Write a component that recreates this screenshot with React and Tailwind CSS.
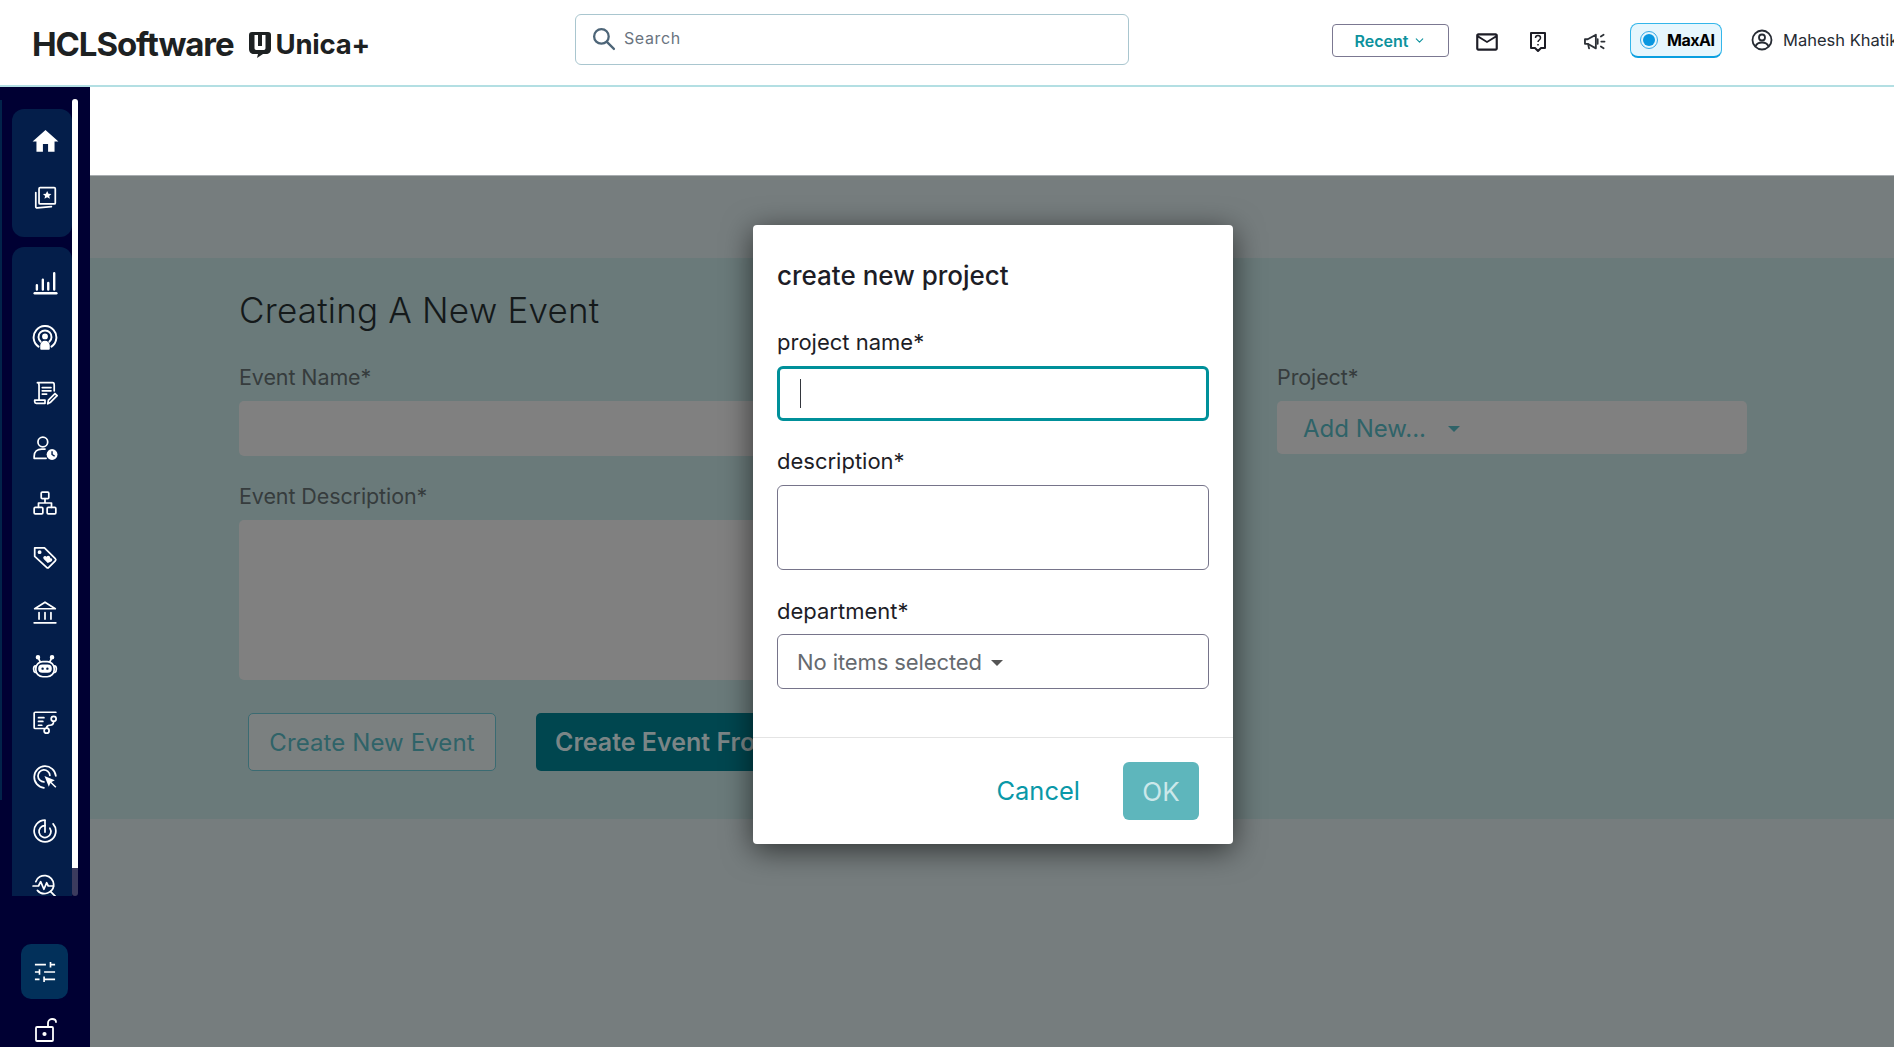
import React from "react";
import { MdHome, MdOutlineMailOutline } from "react-icons/md";
import { ChevronDown } from "lucide-react";

const F = "font-['Inter','Noto_Sans',sans-serif]";

const S = ({ children, fill = "none", w = 1.6, size = 26 }) => (
  <svg width={size} height={size} viewBox="0 0 24 24" fill={fill} stroke="currentColor" strokeWidth={w} strokeLinecap="round" strokeLinejoin="round">
    {children}
  </svg>
);

const icons = {
  star: (
    <S>
      <rect x="6.500" y="2.500" width="15" height="15" rx="1" />
      <path d="M3.500 7v13c0 .8.6 1.300 1.400 1.200l13-1.200" />
      <path d="M14 5.500l1.200 2.500 2.700.3-2 1.800.6 2.700-2.500-1.400-2.500 1.400.6-2.700-2-1.800 2.700-.3z" fill="currentColor" stroke="none" />
    </S>
  ),
  chart: (
    <S w={2.200}>
      <path d="M2.500 21.500h20" />
      <path d="M4.500 18v-4M10 18V9M15 18v-6M20.500 18V3" />
    </S>
  ),
  podcast: (
    <S w={1.800}>
      <path d="M6 20a10.500 10.500 0 1 1 12 0" />
      <path d="M8 15.500a6 6 0 1 1 8 0" />
      <circle cx="12" cy="10.500" r="1.800" fill="currentColor" />
      <path d="M8.500 22v-3c0-2 1.500-3.500 3.500-3.500s3.500 1.500 3.500 3.500v3z" fill="currentColor" />
    </S>
  ),
  doc: (
    <S>
      <path d="M6.500 18.500V5c0-1.500-.3-2.500-1.500-2.500h14c1 0 1.500 1 1.500 2V10" />
      <path d="M2.500 18.500h9.500v3H4c-1 0-1.500-.7-1.500-1.500z" />
      <path d="M9.500 7h8M9.500 10h8M9.500 13h4" />
      <path d="M14.500 22l.7-3.500 6-6 2 2-6 6z" />
    </S>
  ),
  userclock: (
    <S>
      <circle cx="10" cy="6.500" r="4.500" />
      <path d="M2 21.500v-2c0-4 3-6.500 7-6.500h3M2 21.500h11" />
      <circle cx="18.500" cy="18" r="5" fill="currentColor" stroke="none" />
      <path d="M18.500 15.500V18l2 1.200" stroke="#041e4a" strokeWidth="1.300" />
    </S>
  ),
  network: (
    <S>
      <rect x="8.500" y="2" width="7" height="6" rx="1" />
      <rect x="2" y="16" width="8" height="6" rx="1" />
      <rect x="14" y="16" width="8" height="6" rx="1" />
      <path d="M12 8v4M6 16v-4h12v4" />
    </S>
  ),
  tag: (
    <S>
      <path d="M2.500 3.500h9l10 10c.6.6.6 1.400 0 2l-6 6c-.6.6-1.400.6-2 0l-11-10z" />
      <circle cx="7" cy="7.500" r="1" fill="currentColor" />
      <path d="M14.500 17.500l-3.700-3.700c-1.500-2 1.200-3.800 2.700-2 1-1.800 3.800-.6 3.300 1.400 2-.2 2.600 2 1 3z" fill="currentColor" stroke="none" />
    </S>
  ),
  bank: (
    <S>
      <path d="M2.500 9L12 3l9.500 6z" />
      <path d="M2 22h20M6.500 12.500v6M12 12.500v6M17.500 12.500v6" />
    </S>
  ),
  bot: (
    <S>
      <rect x="3.500" y="7" width="17" height="14" rx="6.500" />
      <path d="M3 11c-2 .5-2 5 0 6M21 11c2 .5 2 5 0 6" />
      <circle cx="5.500" cy="3" r="1.300" fill="currentColor" />
      <circle cx="18.500" cy="3" r="1.300" fill="currentColor" />
      <path d="M6 4l1.500 3M18 4l-1.500 3" />
      <rect x="6.500" y="10.500" width="11" height="6" rx="3" fill="currentColor" />
      <circle cx="9.800" cy="13.500" r="1.100" fill="#041e4a" stroke="none" />
      <circle cx="14.200" cy="13.500" r="1.100" fill="#041e4a" stroke="none" />
    </S>
  ),
  flow: (
    <S>
      <path d="M22 3H3c-.6 0-1 .4-1 1v13c0 .6.4 1 1 1h8" />
      <path d="M6 8h5M6 11.500h4M6 15h3" />
      <circle cx="20" cy="9" r="2.300" />
      <circle cx="13.500" cy="20" r="2.300" />
      <path d="M20 11.300c0 3-2 3.700-3.500 3.700s-3 1-3 2.500" />
    </S>
  ),
  cursor: (
    <S>
      <path d="M11 22a10 10 0 1 1 11-11" />
      <path d="M11 16.500a5.500 5.500 0 1 1 5.500-6" />
      <path d="M11.500 11l4 10 1.500-3.500 4.500 4.500 1-1-4.500-4.500 3-1.500z" fill="currentColor" stroke="none" />
    </S>
  ),
  radar: (
    <S>
      <path d="M12 2a10 10 0 1 0 7.500 3.400" />
      <path d="M12 7a5.500 5.500 0 1 0 4.500 2.400" />
      <path d="M12 2.500V13" />
    </S>
  ),
  wave: (
    <S>
      <path d="M3.500 8a8.500 8.500 0 0 1 16.500 2.500 8.500 8.500 0 0 1-15 5.500" />
      <path d="M1 12h5l2-4 3 7 2.500-6 1.500 3h5" />
      <path d="M17 17l6 6" />
    </S>
  ),
};

const SideIcon = ({ name, home }) => (
  <div className="flex h-[54.800px] w-full shrink-0 items-center justify-center pl-[6px] text-white">
    {home ? <MdHome size={31} /> : icons[name]}
  </div>
);

const Label = ({ children, className = "" }) => (
  <div className={`text-[21.500px] leading-[28px] tracking-[-0.1px] text-[#363c3d] ${className}`}>{children}</div>
);

const ModalLabel = ({ children }) => (
  <div className="text-[22px] leading-[28px] text-[#1d1d26]">{children}</div>
);

export default function App() {
  return (
    <div className={`relative flex h-screen w-full flex-col overflow-hidden bg-white ${F}`}>
      <header className="flex h-[87px] shrink-0 items-center overflow-hidden border-b-2 border-[#b3dfe3] bg-white">
        <div className="flex w-[575px] shrink-0 items-center pl-[32px] pt-[4px] text-[#1d2122]">
          <span className="text-[33px] font-bold leading-none tracking-[-1.100px]">HCLSoftware</span>
          <svg className="ml-[15px]" width="24" height="28" viewBox="0 0 24 28" fill="currentColor">
            <path d="M4 1h16c2 0 3 1 3 3v14c0 3-2 5-5 5h-3l-6 4 1-4H6c-3 0-5-2-5-5V4c0-2 1-3 3-3zm2.500 3v13c0 1.500 1 2 2 2h7c1 0 2-.5 2-2V4h-3.500v11h-4V4z" fillRule="evenodd" />
          </svg>
          <span className="ml-[3px] text-[27.500px] font-bold leading-none tracking-[-0.2px]">Unica+</span>
        </div>
        <div className="mt-[-6px] flex h-[51px] w-[554px] shrink-0 items-center rounded-[6px] border border-[#a9c6cf] pl-[15px]">
          <svg className="mb-[2px]" width="25" height="25" viewBox="0 0 24 24" fill="none" stroke="#4d6578" strokeWidth="2.200" strokeLinecap="round">
            <circle cx="10" cy="10" r="7" />
            <path d="M15.500 15.500L22 22" />
          </svg>
          <span className="mb-[4px] ml-[8px] text-[16px] tracking-[0.6px] text-[#6a7480]">Search</span>
        </div>
        <div className="ml-[203px] mt-[-4px] flex h-[33px] w-[117px] shrink-0 items-center justify-center gap-[5px] rounded-[4px] border border-[#7b7891] text-[16px] font-semibold text-[#0d929d]">
          Recent <ChevronDown size={13} />
        </div>
        <div className="ml-[25px] mt-[-2px] flex shrink-0 items-center text-[#1d1d26]">
          <MdOutlineMailOutline size={26} />
          <svg className="ml-[29px]" width="18" height="22" viewBox="0 0 18 22" fill="none" stroke="currentColor" strokeWidth="2">
            <path d="M2 2h14v15h-4l-3 3-3-3H2z" strokeLinejoin="round" />
            <path d="M6.500 7c0-3.200 5-3.200 5 0 0 2-2.500 2-2.500 4M9 13v1.500" strokeWidth="1.500" />
          </svg>
          <svg className="ml-[35px]" width="25" height="20" viewBox="0 0 24 22" fill="none" stroke="#2c3036" strokeWidth="2" strokeLinecap="round">
            <path d="M1.500 8v5h3l9 5V3l-9 5z" strokeLinejoin="round" />
            <path d="M5 13.500l1 4.500M15.500 8v5M19 5l3-2M19.500 10.500H23M19 16l3 2" />
          </svg>
        </div>
        <div className="ml-[23px] mt-[-4px] flex h-[35px] w-[92px] shrink-0 items-center rounded-[8px] border border-[#34b6ea] border-b-2 border-b-[#0a9fe0] bg-[#e6f6fd] pl-[9px]">
          <span className="relative flex h-[18px] w-[18px] items-center justify-center rounded-full border border-[#36a9e6]">
            <span className="h-[12px] w-[12px] rounded-full bg-[#0a97e0]" />
          </span>
          <span className="ml-[9px] text-[16px] font-bold tracking-[-0.5px] text-black">MaxAI</span>
        </div>
        <div className="ml-[29px] mt-[-6px] flex shrink-0 items-center text-[#262b33]">
          <svg width="22" height="22" viewBox="0 0 22 22" fill="none" stroke="currentColor" strokeWidth="1.800">
            <circle cx="11" cy="11" r="9.500" />
            <circle cx="11" cy="8.500" r="3" />
            <path d="M4.500 17.500c1-3 3.500-4 6.500-4s5.500 1 6.500 4" />
          </svg>
          <span className="ml-[10px] mt-[2px] whitespace-nowrap text-[16.500px]">Mahesh Khatik</span>
        </div>
      </header>

      <div className="flex min-h-0 flex-1">
        <aside className="flex w-[90px] shrink-0 flex-col bg-[#000033]">
          <div className="flex h-[809px] shrink-0">
            <div className="mb-[96px] mt-[13px] w-[2px] shrink-0 bg-[#02234a]" />
            <div className="flex h-full w-[70px] shrink-0 flex-col gap-[10px] pl-[10px] pt-[22px]">
              <div className="flex h-[128px] w-[60px] shrink-0 flex-col gap-[2px] rounded-[12px] bg-[#041e4a] pt-[5px]">
                <SideIcon home />
                <SideIcon name="star" />
              </div>
              <div className="flex min-h-0 w-[60px] flex-1 flex-col overflow-hidden rounded-t-[12px] bg-[#041e4a] pt-[9px]">
                {["chart", "podcast", "doc", "userclock", "network", "tag", "bank", "bot", "flow", "cursor", "radar", "wave"].map((n) => (
                  <SideIcon key={n} name={n} />
                ))}
              </div>
            </div>
            <div className="mt-[12px] flex w-[6px] shrink-0 flex-col">
              <div className="h-[769px] rounded-t-[3px] bg-white" />
              <div className="h-[28px] rounded-b-[3px] bg-[#3b3b5e]" />
            </div>
          </div>
          <div className="flex flex-1 flex-col pl-[21px] pt-[48px]">
            <div className="flex h-[55px] w-[47px] items-center justify-center rounded-[10px] bg-[#02305a] text-white">
              <svg width="22" height="22" viewBox="0 0 24 24" fill="none" stroke="currentColor" strokeWidth="1.800">
                <path d="M1 4h12M18 4h5M18 1v6M1 12h5M11 12h12M6 9v6M1 20h5M11 20h12M11 17v6" />
              </svg>
            </div>
            <div className="ml-[2px] mt-[18px] flex w-[47px] justify-center text-white">
              <svg width="26" height="26" viewBox="0 0 26 26" fill="none" stroke="currentColor" strokeWidth="1.800" strokeLinecap="round">
                <rect x="2" y="10" width="17" height="14" rx="1" />
                <circle cx="10.500" cy="17" r="1.200" fill="currentColor" />
                <path d="M14 10V6c0-2 1.500-4 4-4s4 1.500 4 3" />
              </svg>
            </div>
          </div>
        </aside>

        <main className="flex min-w-0 flex-1 flex-col">
          <div className="h-[89px] shrink-0 border-b border-[#a8adb0] bg-white" />
          <div className="flex flex-1 flex-col bg-[#767d7e] pt-[82px]">
            <section className="h-[561px] bg-[#6a7a7a] pl-[149px] pt-[30px]">
              <h1 className="text-[35px] font-light leading-[44px] tracking-[0.2px] text-[#14191a]">Creating A New Event</h1>
              <div className="mt-[31px] flex gap-[58px]">
                <div className="w-[980px] shrink-0">
                  <Label>Event Name*</Label>
                  <div className="mt-[10px] h-[55px] rounded-[5px] bg-[#808080]" />
                  <Label className="mt-[26px]">Event Description*</Label>
                  <div className="mt-[10px] h-[160px] rounded-[5px] bg-[#808080]" />
                  <div className="ml-[9px] mt-[33px] flex items-center gap-[40px]">
                    <div className="flex h-[58px] w-[248px] items-center justify-center rounded-[5px] border border-[#3a6b72] bg-[#7b8080] pt-[2px] text-[24px] tracking-[0.1px] text-[#2f6368]">
                      Create New Event
                    </div>
                    <div className="flex h-[58px] w-[500px] items-center rounded-[5px] bg-[#00464f] pl-[19px] pt-[2px] text-[25px] font-semibold text-[#7b8586]">
                      Create Event From
                    </div>
                  </div>
                </div>
                <div className="w-[470px] shrink-0">
                  <Label>Project*</Label>
                  <div className="mt-[10px] flex h-[53px] items-center rounded-[5px] bg-[#808080] pl-[26px] pt-[3px] text-[24px] text-[#2f6368]">
                    Add New...
                    <span className="ml-[22px] h-0 w-0 border-x-[6px] border-t-[6px] border-x-transparent border-t-[#2f6368]" />
                  </div>
                </div>
              </div>
            </section>
          </div>
        </main>
      </div>

      <div className="absolute left-[753px] top-[225px] h-[619px] w-[480px] rounded-[4px] bg-white shadow-[0_6px_30px_rgba(0,0,0,0.6)]">
        <div className="px-[24px] pt-[34px]">
          <div className="text-[26px] font-medium leading-[34px] text-[#1d1d26]">create new project</div>
          <div className="mt-[35px]"><ModalLabel>project name*</ModalLabel></div>
          <div className="mt-[10px] flex h-[55px] items-center rounded-[6px] border-[3px] border-[#00909a] pl-[20px]">
            <span className="h-[29px] w-px bg-[#33363d]" />
          </div>
          <div className="mt-[26px]"><ModalLabel>description*</ModalLabel></div>
          <div className="mt-[10px] h-[85px] rounded-[6px] border border-[#76748a]" />
          <div className="mt-[27px]"><ModalLabel>department*</ModalLabel></div>
          <div className="mt-[9px] flex h-[55px] items-center rounded-[6px] border border-[#76748a] pl-[19px] pt-[1px] text-[22px] tracking-[-0.1px] text-[#666a6f]">
            No items selected
            <span className="ml-[9px] mt-[2px] h-0 w-0 border-x-[6px] border-t-[6px] border-x-transparent border-t-[#555]" />
          </div>
        </div>
        <div className="mt-[48px] flex h-[107px] items-center justify-end border-t border-[#e4e4e4] pr-[34px]">
          <span className="text-[25.500px] text-[#0a98a8]">Cancel</span>
          <div className="ml-[43px] flex h-[58px] w-[76px] items-center justify-center rounded-[6px] bg-[#5eb6bc] text-[26px] text-[#cbe8ea]">OK</div>
        </div>
      </div>
    </div>
  );
}
